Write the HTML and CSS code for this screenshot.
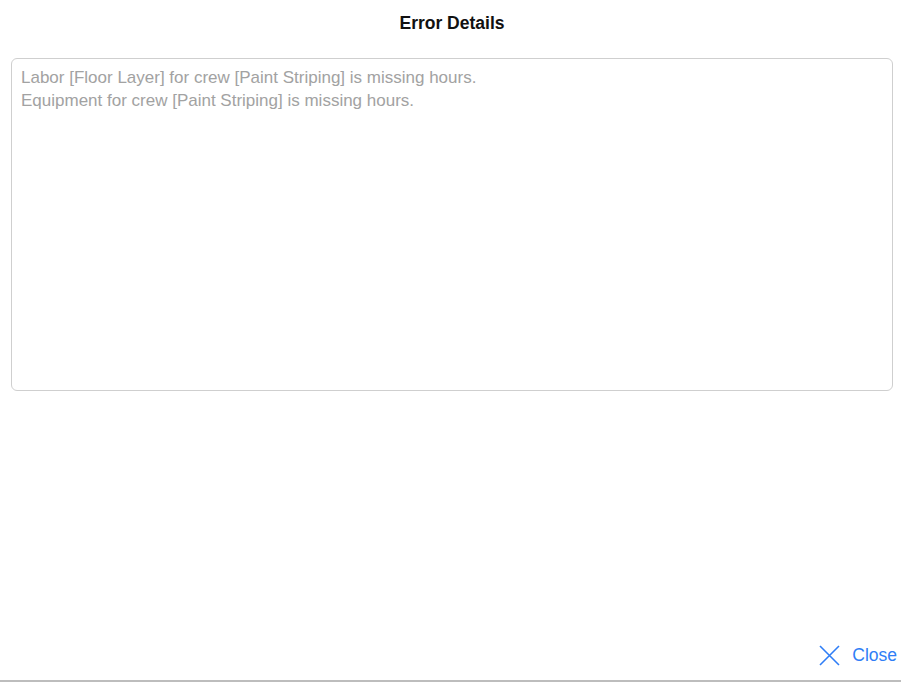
FILE: index.html
```html
<!DOCTYPE html>
<html>
<head>
<meta charset="utf-8">
<link rel="stylesheet" href="styles.css">
</head>
<body>
<div class="dialog">
  <header class="title">Error Details</header>
  <div class="box">
    <div class="line">Labor [Floor Layer] for crew [Paint Striping] is missing hours.</div>
    <div class="line">Equipment for crew [Paint Striping] is missing hours.</div>
  </div>
  <div class="spacer"></div>
  <footer class="footer">
    <button class="close">
      <svg class="x" width="21" height="21" viewBox="0 0 21 21"><path d="M1 1 L20 20 M20 1 L1 20" stroke="#2f7ef6" stroke-width="1.6" fill="none"/></svg>
      <span>Close</span>
    </button>
  </footer>
</div>
</body>
</html>
```
FILE: styles.css
```css
* { box-sizing: border-box; }
html, body { margin: 0; padding: 0; height: 100%; background: #fff; }
body { font-family: "Liberation Sans", Arial, sans-serif; }
.dialog {
  height: 682px;
  display: flex;
  flex-direction: column;
  border-bottom: 2px solid #bdbdbd;
}
.title {
  text-align: center;
  font-weight: bold;
  font-size: 17.5px;
  color: #111;
  padding-top: 13px;
  height: 58px;
  padding-left: 3px;
}
.box {
  margin: 0 8px 0 11px;
  height: 333px;
  border: 1px solid #cfcfcf;
  border-radius: 6px;
  padding: 7px 9px;
  color: #a2a2a2;
  font-size: 17px;
  line-height: 23px;
}
.spacer { flex: 1; }
.footer {
  display: flex;
  justify-content: flex-end;
  padding: 0 4px 14px 0;
}
.close {
  display: flex;
  align-items: center;
  gap: 12px;
  background: none;
  border: none;
  padding: 0;
  font-family: "Liberation Sans", Arial, sans-serif;
  font-size: 17.5px;
  color: #2f7ef6;
}
.x { display: block; }
```
